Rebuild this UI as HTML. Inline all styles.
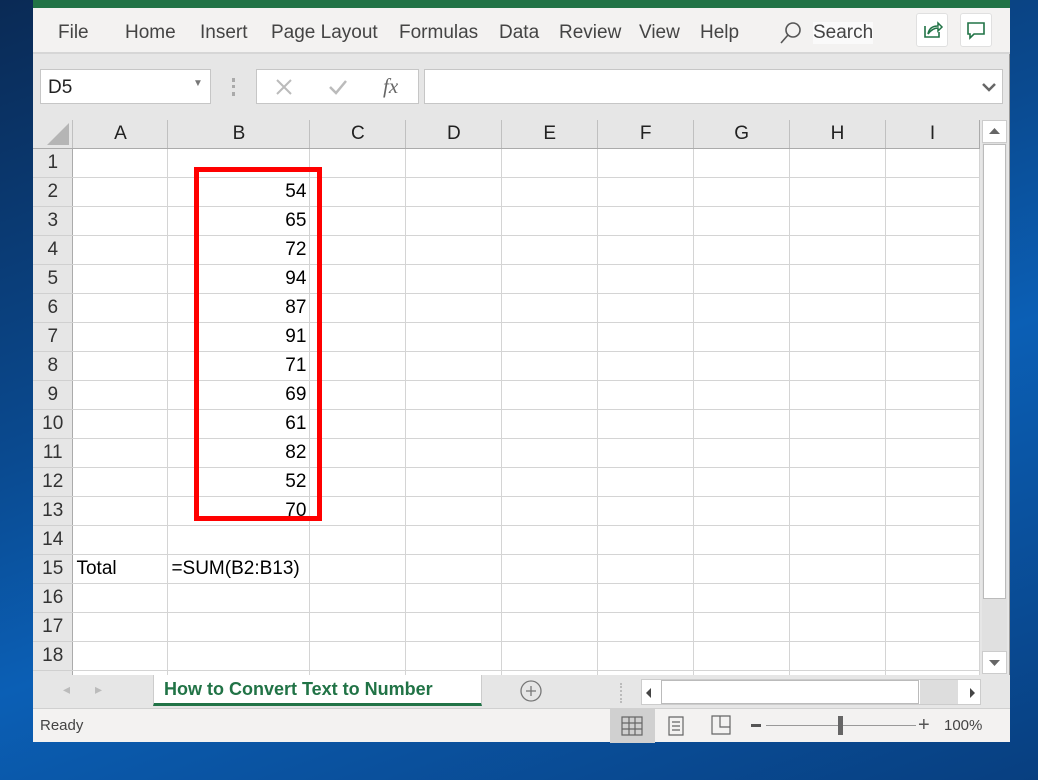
<!DOCTYPE html>
<html><head><style>
*{margin:0;padding:0;box-sizing:border-box}
body{width:1038px;height:780px;overflow:hidden;position:relative;font-family:"Liberation Sans",sans-serif;background:linear-gradient(160deg,#0a2a55 0%,#0a4a90 40%,#0b5fb5 60%,#083f80 100%)}
.win{position:absolute;left:33px;top:0;width:977px;height:742px;background:#e6e6e6;border-right:1px solid #999}
.green{position:absolute;left:0;top:0;width:977px;height:8px;background:#217346}
.ribbon{position:absolute;left:0;top:8px;width:977px;height:46px;background:#f3f2f1;border-bottom:2px solid #d6d6d6}
.ribbon span{position:absolute;top:14px;font-size:19px;color:#444}
.ib{position:absolute;top:5px;width:32px;height:34px;background:#fff;border:1px solid #e0e0e0;border-radius:3px}
.box{position:absolute;background:#fff;border:1px solid #c6c6c6}
.gridwrap{position:absolute;left:0;top:120px;width:947px;height:555px;overflow:hidden}
table{border-collapse:collapse;position:absolute;left:0;top:0}
td{height:29px;border-right:1px solid #d4d4d4;border-bottom:1px solid #d4d4d4;font-size:19px;color:#000;background:#fff;white-space:nowrap;padding:0 3px}
td.rh{background:#e6e6e6;color:#333;text-align:center;border-right:1px solid #ababab;border-bottom:1px solid #d0d0d0}
tr.ch td{background:#e6e6e6;height:28px;text-align:center;color:#222;border-right:1px solid #c0c0c0;border-bottom:1px solid #ababab}
td.n{text-align:right}
.red{position:absolute;left:161px;top:47px;width:128px;height:354px;border:5px solid #f00}
.status{position:absolute;left:0;top:708px;width:977px;height:34px;background:#f3f2f1;border-top:1px solid #d0d0d0}
</style></head><body>
<div class="win">
<div class="green"></div>
<div class="ribbon">
<span style="left:25px">File</span><span style="left:92px">Home</span><span style="left:167px">Insert</span><span style="left:238px">Page Layout</span><span style="left:366px">Formulas</span><span style="left:466px">Data</span><span style="left:526px">Review</span><span style="left:606px">View</span><span style="left:667px">Help</span>
<svg style="position:absolute;left:746px;top:12px" width="24" height="26"><circle cx="14" cy="10" r="7" fill="none" stroke="#555" stroke-width="1.6"/><line x1="9" y1="15" x2="2" y2="23" stroke="#555" stroke-width="1.6"/></svg>
<span style="left:780px;background:#fafafa">Search</span>
<div class="ib" style="left:883px"><svg width="30" height="32"><path d="M8 12v11h14v-5" fill="none" stroke="#217346" stroke-width="1.6"/><path d="M11 20c1-6 5-8 10-8v-3l4 4-4 4v-3c-4 0-7 2-10 6z" fill="none" stroke="#217346" stroke-width="1.5"/></svg></div>
<div class="ib" style="left:927px"><svg width="30" height="32"><path d="M7 9h16v11h-10l-4 4v-4h-2z" fill="none" stroke="#217346" stroke-width="1.6"/></svg></div>
</div>
<div class="box" style="left:7px;top:69px;width:171px;height:35px"><span style="position:absolute;left:7px;top:7px;font-size:19px;color:#222">D5</span><span style="position:absolute;left:152px;top:8px;font-size:10px;color:#777">▼</span></div>
<div style="position:absolute;left:199px;top:78px;width:3px;height:18px;border-left:3px dotted #aaa"></div>
<div class="box" style="left:223px;top:69px;width:163px;height:35px">
<svg width="160" height="34"><path d="M20 10l14 14M34 10l-14 14" stroke="#bbb" stroke-width="2"/><path d="M73 17l6 6 10-12" fill="none" stroke="#bbb" stroke-width="2.5"/></svg>
<span style="position:absolute;left:126px;top:4px;font-family:'Liberation Serif',serif;font-style:italic;font-size:21px;color:#666">fx</span></div>
<div class="box" style="left:391px;top:69px;width:579px;height:35px"><svg style="position:absolute;right:6px;top:12px" width="14" height="10"><path d="M1 2l6 6 6-6" fill="none" stroke="#666" stroke-width="2.5"/></svg></div>
<div class="gridwrap">
<table>
<tr class="ch"><td class="rh" style="width:40px;border-bottom:1px solid #ababab;position:relative"><svg style="position:absolute;right:3px;bottom:3px" width="22" height="22"><path d="M22 0v22h-22z" fill="#b5b5b5"/></svg></td><td style="width:95px">A</td><td style="width:142px">B</td><td style="width:96px">C</td><td style="width:96px">D</td><td style="width:96px">E</td><td style="width:96px">F</td><td style="width:96px">G</td><td style="width:96px">H</td><td style="width:94px;border-right:1px solid #ababab">I</td></tr>
<tr><td class="rh">1</td><td></td><td></td><td></td><td></td><td></td><td></td><td></td><td></td><td></td></tr>
<tr><td class="rh">2</td><td></td><td class="n">54</td><td></td><td></td><td></td><td></td><td></td><td></td><td></td></tr>
<tr><td class="rh">3</td><td></td><td class="n">65</td><td></td><td></td><td></td><td></td><td></td><td></td><td></td></tr>
<tr><td class="rh">4</td><td></td><td class="n">72</td><td></td><td></td><td></td><td></td><td></td><td></td><td></td></tr>
<tr><td class="rh">5</td><td></td><td class="n">94</td><td></td><td></td><td></td><td></td><td></td><td></td><td></td></tr>
<tr><td class="rh">6</td><td></td><td class="n">87</td><td></td><td></td><td></td><td></td><td></td><td></td><td></td></tr>
<tr><td class="rh">7</td><td></td><td class="n">91</td><td></td><td></td><td></td><td></td><td></td><td></td><td></td></tr>
<tr><td class="rh">8</td><td></td><td class="n">71</td><td></td><td></td><td></td><td></td><td></td><td></td><td></td></tr>
<tr><td class="rh">9</td><td></td><td class="n">69</td><td></td><td></td><td></td><td></td><td></td><td></td><td></td></tr>
<tr><td class="rh">10</td><td></td><td class="n">61</td><td></td><td></td><td></td><td></td><td></td><td></td><td></td></tr>
<tr><td class="rh">11</td><td></td><td class="n">82</td><td></td><td></td><td></td><td></td><td></td><td></td><td></td></tr>
<tr><td class="rh">12</td><td></td><td class="n">52</td><td></td><td></td><td></td><td></td><td></td><td></td><td></td></tr>
<tr><td class="rh">13</td><td></td><td class="n">70</td><td></td><td></td><td></td><td></td><td></td><td></td><td></td></tr>
<tr><td class="rh">14</td><td></td><td></td><td></td><td></td><td></td><td></td><td></td><td></td><td></td></tr>
<tr><td class="rh">15</td><td>Total</td><td>=SUM(B2:B13)</td><td></td><td></td><td></td><td></td><td></td><td></td><td></td></tr>
<tr><td class="rh">16</td><td></td><td></td><td></td><td></td><td></td><td></td><td></td><td></td><td></td></tr>
<tr><td class="rh">17</td><td></td><td></td><td></td><td></td><td></td><td></td><td></td><td></td><td></td></tr>
<tr><td class="rh">18</td><td></td><td></td><td></td><td></td><td></td><td></td><td></td><td></td><td></td></tr>
<tr><td class="rh">19</td><td></td><td></td><td></td><td></td><td></td><td></td><td></td><td></td><td></td></tr>
</table>
<div class="red"></div>
</div>
<div style="position:absolute;left:949px;top:120px;width:25px;height:554px;background:#e0e0e0">
<div style="position:absolute;left:0;top:0;width:25px;height:23px;background:#fff;border:1px solid #ccc"><svg width="23" height="21"><path d="M6 13l5.5-6 5.5 6z" fill="#666"/></svg></div>
<div style="position:absolute;left:1px;top:24px;width:23px;height:455px;background:#fff;border:1px solid #bbb"></div>
<div style="position:absolute;left:0;top:531px;width:25px;height:23px;background:#fff;border:1px solid #ccc"><svg width="23" height="21"><path d="M6 8l5.5 6 5.5-6z" fill="#666"/></svg></div>
</div>
<div style="position:absolute;left:0;top:675px;width:977px;height:33px;background:#e6e6e6">
<span style="position:absolute;left:30px;top:6px;color:#bbb;font-size:14px">◂</span><span style="position:absolute;left:62px;top:6px;color:#bbb;font-size:14px">▸</span>
<div style="position:absolute;left:120px;top:0;width:329px;height:31px;background:#fff;border-bottom:3px solid #217346;border-left:1px solid #ccc;border-right:1px solid #ccc"><span style="position:absolute;left:10px;top:4px;font-size:18px;font-weight:bold;color:#217346">How to Convert Text to Number</span></div>
<svg style="position:absolute;left:487px;top:5px" width="24" height="24"><circle cx="11" cy="11" r="10" fill="none" stroke="#777" stroke-width="1.3"/><path d="M11 6v10M6 11h10" stroke="#777" stroke-width="1.3"/></svg>
<div style="position:absolute;left:587px;top:8px;height:20px;border-left:2px dotted #bbb"></div>
<div style="position:absolute;left:608px;top:4px;width:340px;height:26px;background:#fff;border:1px solid #ccc">
<svg style="position:absolute;left:2px;top:6px" width="10" height="14"><path d="M7 2l-5 5 5 5z" fill="#444"/></svg>
<div style="position:absolute;left:19px;top:0;width:258px;height:24px;border:1px solid #bbb"></div>
<div style="position:absolute;left:278px;top:0;width:38px;height:24px;background:#ddd"></div>
<svg style="position:absolute;left:325px;top:6px" width="10" height="14"><path d="M3 2l5 5-5 5z" fill="#444"/></svg>
</div>
</div>
<div class="status">
<span style="position:absolute;left:7px;top:8px;font-size:15px;color:#444">Ready</span>
<div style="position:absolute;left:577px;top:0;width:45px;height:34px;background:#d0d0d0"></div>
<svg style="position:absolute;left:588px;top:7px" width="22" height="20"><path d="M1 1h20v18h-20zM1 7h20M1 13h20M8 1v18M14 1v18" fill="none" stroke="#666" stroke-width="1.2"/></svg>
<svg style="position:absolute;left:634px;top:7px" width="20" height="20"><path d="M2 1h14v18h-14z M5 6h8M5 10h8M5 14h8" fill="none" stroke="#666" stroke-width="1.2"/></svg>
<svg style="position:absolute;left:678px;top:6px" width="22" height="22"><path d="M1 1h18v18h-18zM9 1v11h10" fill="none" stroke="#666" stroke-width="1.2"/></svg>
<div style="position:absolute;left:718px;top:15px;width:10px;height:3px;background:#555"></div>
<div style="position:absolute;left:733px;top:16px;width:150px;height:1px;background:#999"></div>
<div style="position:absolute;left:805px;top:7px;width:5px;height:19px;background:#666"></div>
<span style="position:absolute;left:885px;top:5px;font-size:20px;color:#555">+</span>
<span style="position:absolute;left:911px;top:8px;font-size:15px;color:#444">100%</span>
</div>
</div>
</body></html>
